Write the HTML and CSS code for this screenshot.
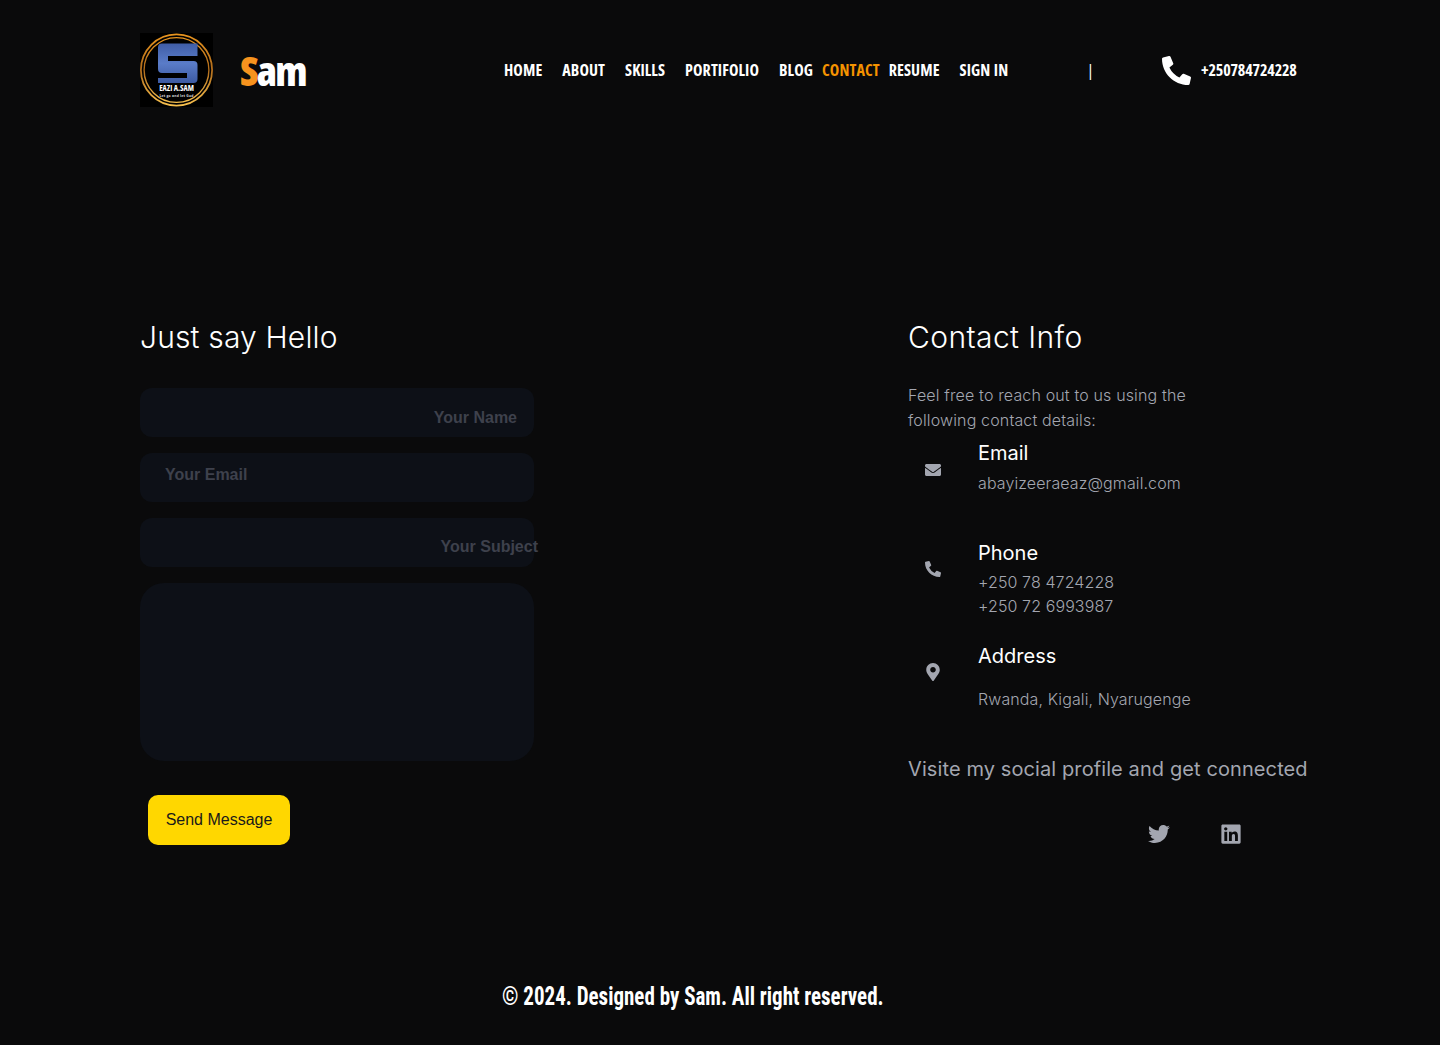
FILE: index.html
```html
<!DOCTYPE html>
<html lang="en">
<head>
<meta charset="utf-8">
<title>Contact</title>
<link rel="stylesheet" href="styles.css">
</head>
<body>
<header class="header">
  <svg class="logo" viewBox="0 0 73 74" aria-hidden="true">
    <defs>
      <linearGradient id="gold" x1="0" y1="0" x2="0" y2="1">
        <stop offset="0" stop-color="#e8941f"/><stop offset=".5" stop-color="#b06c1c"/><stop offset="1" stop-color="#f7c04e"/>
      </linearGradient>
      <linearGradient id="blue" x1="0" y1="0" x2="0" y2="1">
        <stop offset="0" stop-color="#3f5da6"/><stop offset=".5" stop-color="#5a7cc8"/><stop offset="1" stop-color="#3d5aa2"/>
      </linearGradient>
    </defs>
    <rect width="73" height="74" fill="#000"/>
    <circle cx="36.5" cy="37" r="35.6" fill="none" stroke="url(#gold)" stroke-width="1.8"/>
    <circle cx="36.5" cy="37" r="32.4" fill="none" stroke="url(#gold)" stroke-width="1.4"/>
    <path d="M22 10.5H57.5V23H28V28H53.5Q57.5 28 57.5 32V46Q57.5 50 53.5 50H18V45H47V40H22Q18 40 18 36V14.5Q18 10.5 22 10.5Z" fill="url(#blue)"/>
    <text x="36.5" y="58" class="logo-name" text-anchor="middle">EAZI A.SAM</text>
    <text x="36.5" y="63.5" class="logo-tag" text-anchor="middle">Let go and let God</text>
  </svg>
  <div class="brand"><span class="brand-s">S</span>am</div>
  <nav class="nav">
    <a class="nav-link">HOME</a>
    <a class="nav-link">ABOUT</a>
    <a class="nav-link">SKILLS</a>
    <a class="nav-link">PORTIFOLIO</a>
    <a class="nav-link nav-blog">BLOG</a>
    <a class="nav-link nav-active">CONTACT</a>
    <a class="nav-link">RESUME</a>
    <a class="nav-link">SIGN IN</a>
  </nav>
  <span class="sep">|</span>
  <svg class="head-phone" viewBox="0 0 512 512" aria-hidden="true"><path d="M497.39 361.8l-112-48a24 24 0 0 0-28 6.9l-49.6 60.6A370.66 370.66 0 0 1 130.6 204.11l60.6-49.6a23.94 23.94 0 0 0 6.9-28l-48-112A24.16 24.16 0 0 0 122.6.61l-104 24A24 24 0 0 0 0 48c0 256.5 207.9 464 464 464a24 24 0 0 0 23.4-18.6l24-104a24.29 24.29 0 0 0-14.01-27.6z"/></svg>
  <span class="head-number">+250784724228</span>
</header>

<main class="main">
  <section class="form-col">
    <h2 class="title">Just say Hello</h2>
    <form class="form">
      <div class="field field-name"><span class="ph">Your Name</span></div>
      <div class="field field-email"><span class="ph">Your Email</span></div>
      <div class="field field-subject"><span class="ph">Your Subject</span></div>
      <div class="field-area"></div>
      <button class="send" type="button">Send Message</button>
    </form>
  </section>

  <section class="info-col">
    <h2 class="title">Contact Info</h2>
    <p class="intro">Feel free to reach out to us using the following contact details:</p>
    <div class="item item-email">
      <div class="item-icon"><svg class="ico" viewBox="0 0 512 512" aria-hidden="true"><path d="M502.3 190.8c3.9-3.1 9.7-.2 9.7 4.7V400c0 26.5-21.5 48-48 48H48c-26.5 0-48-21.5-48-48V195.6c0-5 5.7-7.8 9.7-4.7 22.4 17.4 52.1 39.5 154.1 113.6 21.1 15.4 56.7 47.8 92.2 47.6 35.7.3 72-32.8 92.3-47.6 102-74.1 131.6-96.3 154-113.7zM256 320c23.2.4 56.6-29.2 73.4-41.4 132.7-96.3 142.8-104.7 173.4-128.7 5.8-4.5 9.2-11.5 9.2-18.9v-19c0-26.5-21.5-48-48-48H48C21.5 64 0 85.5 0 112v19c0 7.4 3.4 14.3 9.2 18.9 30.6 23.9 40.7 32.4 173.4 128.7 16.8 12.2 50.2 41.8 73.4 41.4z"/></svg></div>
      <div><h3 class="item-title">Email</h3><p class="item-text">abayizeeraeaz@gmail.com</p></div>
    </div>
    <div class="item item-phone">
      <div class="item-icon"><svg class="ico" viewBox="0 0 512 512" aria-hidden="true"><path d="M497.39 361.8l-112-48a24 24 0 0 0-28 6.9l-49.6 60.6A370.66 370.66 0 0 1 130.6 204.11l60.6-49.6a23.94 23.94 0 0 0 6.9-28l-48-112A24.16 24.16 0 0 0 122.6.61l-104 24A24 24 0 0 0 0 48c0 256.5 207.9 464 464 464a24 24 0 0 0 23.4-18.6l24-104a24.29 24.29 0 0 0-14.01-27.6z"/></svg></div>
      <div><h3 class="item-title">Phone</h3><p class="item-text phones">+250 78 4724228<br>+250 72 6993987</p></div>
    </div>
    <div class="item item-address">
      <div class="item-icon"><svg class="ico" viewBox="0 0 384 512" aria-hidden="true"><path d="M172.268 501.67C26.97 291.031 0 269.413 0 192 0 85.961 85.961 0 192 0s192 85.961 192 192c0 77.413-26.97 99.031-172.268 309.67-9.535 13.774-29.93 13.773-39.464 0zM192 272c44.183 0 80-35.817 80-80s-35.817-80-80-80-80 35.817-80 80 35.817 80 80 80z"/></svg></div>
      <div><h3 class="item-title">Address</h3><p class="item-text addr">Rwanda, Kigali, Nyarugenge</p></div>
    </div>
    <p class="social-title">Visite my social profile and get connected</p>
    <div class="social">
      <svg class="soc soc-tw" viewBox="0 0 512 512" aria-hidden="true"><path d="M459.37 151.716c.325 4.548.325 9.097.325 13.645 0 138.72-105.583 298.558-298.558 298.558-59.452 0-114.68-17.219-161.137-47.106 8.447.974 16.568 1.299 25.34 1.299 49.055 0 94.213-16.568 130.274-44.832-46.132-.975-84.792-31.188-98.112-72.772 6.498.974 12.995 1.624 19.818 1.624 9.421 0 18.843-1.3 27.614-3.573-48.081-9.747-84.143-51.98-84.143-102.985v-1.299c13.969 7.797 30.214 12.67 47.431 13.319-28.264-18.843-46.781-51.005-46.781-87.391 0-19.492 5.197-37.36 14.294-52.954 51.655 63.675 129.3 105.258 216.365 109.807-1.624-7.797-2.599-15.918-2.599-24.04 0-57.828 46.782-104.934 104.934-104.934 30.213 0 57.502 12.67 76.67 33.137 23.715-4.548 46.456-13.32 66.599-25.34-7.798 24.366-24.366 44.833-46.132 57.827 21.117-2.273 41.584-8.122 60.426-16.243-14.292 20.791-32.161 39.308-52.628 54.253z"/></svg>
      <svg class="soc soc-in" viewBox="0 0 448 512" aria-hidden="true"><path d="M416 32H31.9C14.3 32 0 46.5 0 64.3v383.4C0 465.5 14.3 480 31.9 480H416c17.6 0 32-14.5 32-32.3V64.3c0-17.8-14.4-32.3-32-32.3zM135.4 416H69V202.2h66.5V416zm-33.2-243c-21.3 0-38.5-17.3-38.5-38.5S80.9 96 102.2 96c21.2 0 38.5 17.3 38.5 38.5 0 21.3-17.2 38.5-38.5 38.5zm282.1 243h-66.4V312c0-24.8-.5-56.7-34.5-56.7-34.6 0-39.9 27-39.9 54.9V416h-66.4V202.2h63.7v29.2h.9c8.9-16.8 30.6-34.5 62.9-34.5 67.2 0 79.7 44.3 79.7 101.9V416z"/></svg>
    </div>
  </section>
</main>

<footer class="footer"><span class="copy">© 2024. Designed by Sam. All right reserved.</span></footer>
</body>
</html>
```
FILE: styles.css
```css
* { box-sizing: border-box; }
html, body { margin: 0; }
body {
  width: 1440px;
  height: 1045px;
  overflow: hidden;
  background: #0a0a0b;
  color: #fff;
  font-family: "Inter", sans-serif;
}
.header {
  display: flex;
  align-items: center;
  height: 107px;
  padding: 33px 0 0 140px;
}
.logo { width: 73px; height: 74px; flex: none; }
.logo-name { font: 700 8px "Open Sans", sans-serif; font-stretch: 75%; fill: #fff; }
.logo-tag { font: 700 3.4px "Open Sans", sans-serif; letter-spacing: .2px; fill: #ddd; }
.brand {
  width: 264px;
  margin-left: 27px;
  font: 800 41px "Open Sans", sans-serif;
  font-stretch: 75%;
  letter-spacing: -1.8px;
}
.brand-s { color: #f7931e; }
.nav { display: flex; gap: 20px; width: 582px; }
.nav-link {
  font: 700 16px "Open Sans", sans-serif;
  font-stretch: 75%;
  letter-spacing: .1px;
  word-spacing: .5px;
  color: #fff;
}
.nav-blog { margin-right: -11px; }
.nav-active { color: #f59300; margin-right: -11px; }
.sep { font: 400 16px "Open Sans", sans-serif; width: 76px; }
.head-phone { width: 29px; height: 33px; fill: #fff; flex: none; }
.head-number {
  margin-left: 10px;
  font: 700 16px "Open Sans", sans-serif;
  font-stretch: 75%;
  letter-spacing: -.15px;
}
.main {
  display: grid;
  grid-template-columns: 394px 392px;
  justify-content: space-between;
  width: 1160px;
  margin: 212px 0 0 140px;
}
.title { margin: 0; font-size: 30px; line-height: 36px; font-weight: 350; letter-spacing: .15px; }
.info-col .title { letter-spacing: .4px; }
.form { display: flex; flex-direction: column; gap: 16px; margin-top: 33px; align-items: flex-start; }
.field {
  position: relative;
  width: 394px;
  height: 49px;
  border-radius: 12px;
  background: #0d1017;
  display: flex;
}
.ph { font: 700 16px "Liberation Sans", sans-serif; color: #3e414c; white-space: nowrap; }
.field-name { justify-content: flex-end; padding: 21px 17px 0 0; }
.field-email { padding: 13px 0 0 25px; }
.field-subject { justify-content: flex-end; padding: 20px 0 0 0; }
.field-subject .ph { margin-right: -4px; }
.field-area { width: 394px; height: 178px; border-radius: 24px; background: #0d1017; }
.send {
  margin: 18px 0 0 8px;
  width: 142px;
  height: 50px;
  border: 0;
  border-radius: 10px;
  background: #ffd700;
  color: #1a1a1a;
  font: 400 16px "Liberation Sans", sans-serif;
}
.intro { margin: 28px 0 0; width: 300px; font-size: 16px; line-height: 25px; font-weight: 350; letter-spacing: .15px; color: #a3a6b0; }
.item { display: grid; grid-template-columns: 70px 1fr; }
.item-email { height: 100px; margin-top: 6px; }
.item-phone { height: 103px; }
.item-address { height: 101px; }
.item-icon { padding: 21px 0 0 17px; }
.item-email .item-icon { padding-top: 22px; }
.ico { display: block; width: 16px; height: 18px; fill: #a3a6b0; }
.item-title { margin: 0; font-size: 20px; line-height: 28px; font-weight: 400; }
.item-text { margin: 4px 0 0; font-size: 16px; line-height: 24px; font-weight: 350; letter-spacing: .1px; color: #a3a6b0; }
.phones { margin-top: 3px; }
.addr { margin-top: 17px; }
.social-title { margin: 12px 0 0; font-size: 20px; line-height: 28px; letter-spacing: .1px; color: #a3a6b0; white-space: nowrap; }
.social { display: flex; gap: 51px; margin: 40px 0 0 240px; }
.soc { display: block; width: 22px; height: 22px; fill: #a3a6b0; }
.soc-in { width: 20px; }
.footer { margin-top: 137px; padding-left: 502px; }
.copy {
  display: inline-block;
  font: 700 25px "Roboto", sans-serif;
  font-stretch: 75%;
  white-space: nowrap;
  transform: scaleX(.84);
  transform-origin: left center;
}
```
